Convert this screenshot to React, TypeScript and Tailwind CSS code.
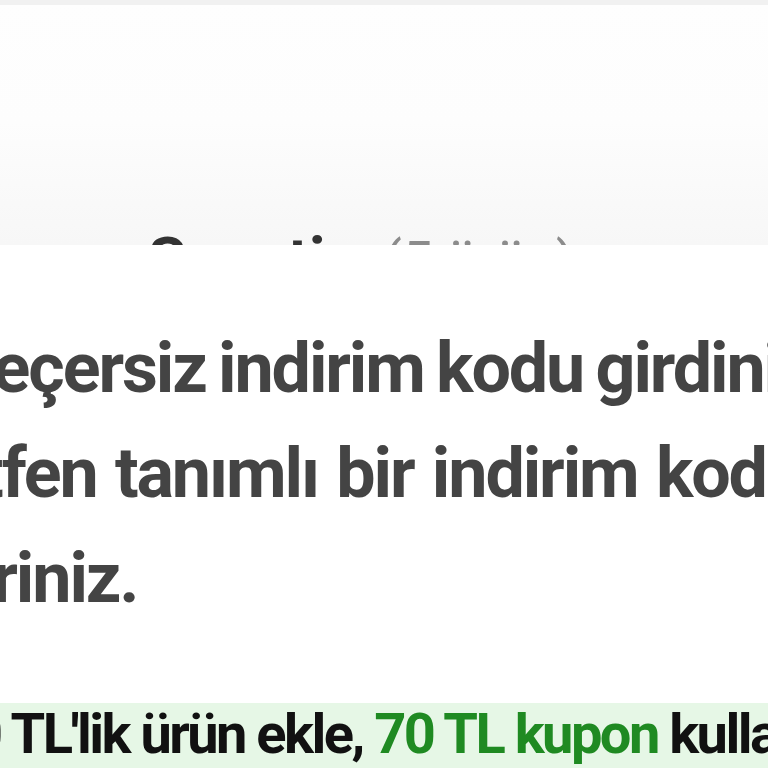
import React from "react";

// Zoomed crop of a mobile cart screen: header, invalid coupon message, promo strip.

const FONT = { fontFamily: "Roboto, 'Noto Sans', sans-serif" };

function CartHeader() {
  return (
    <div className="h-[245px] overflow-hidden bg-gradient-to-b from-[#fefefe] via-[#fdfdfd] to-[#f7f7f7]">
      <div className="h-[5px] bg-[#f1f1f1]" />
      <div className="pl-[148px] pt-[224px] whitespace-nowrap leading-[62px]">
        <span className="text-[62px] font-bold text-[#333333]">Sepetim</span>{" "}
        <span className="text-[55px] font-normal text-[#8c8c8c]">(5 ürün)</span>
      </div>
    </div>
  );
}

function CouponError() {
  return (
    <div className="overflow-hidden bg-white pt-[71px] text-[70px] font-bold leading-[105px] tracking-[-0.03em] text-[#444444] whitespace-nowrap">
      <div className="-ml-[53px] [word-spacing:-3px]">Geçersiz indirim kodu girdiniz.</div>
      <div className="-ml-[92px] [word-spacing:3px]">Lütfen tanımlı bir indirim kodu</div>
      <div className="-ml-[62px]">giriniz.</div>
    </div>
  );
}

function PromoStrip() {
  return (
    <div className="mt-[72px] overflow-hidden bg-[#e6f7e6] pt-[3px] pb-[20px] text-[56px] font-bold leading-[56px] tracking-[-0.045em] whitespace-nowrap text-[#111111]">
      <div className="-ml-[29px]">
        0 TL'lik ürün ekle, <span className="text-[#1f8a22]">70 TL kupon</span> kullan
      </div>
    </div>
  );
}

export default function App() {
  return (
    <div className="h-[768px] w-[768px] overflow-hidden bg-white" style={FONT}>
      <CartHeader />
      <CouponError />
      <PromoStrip />
    </div>
  );
}
